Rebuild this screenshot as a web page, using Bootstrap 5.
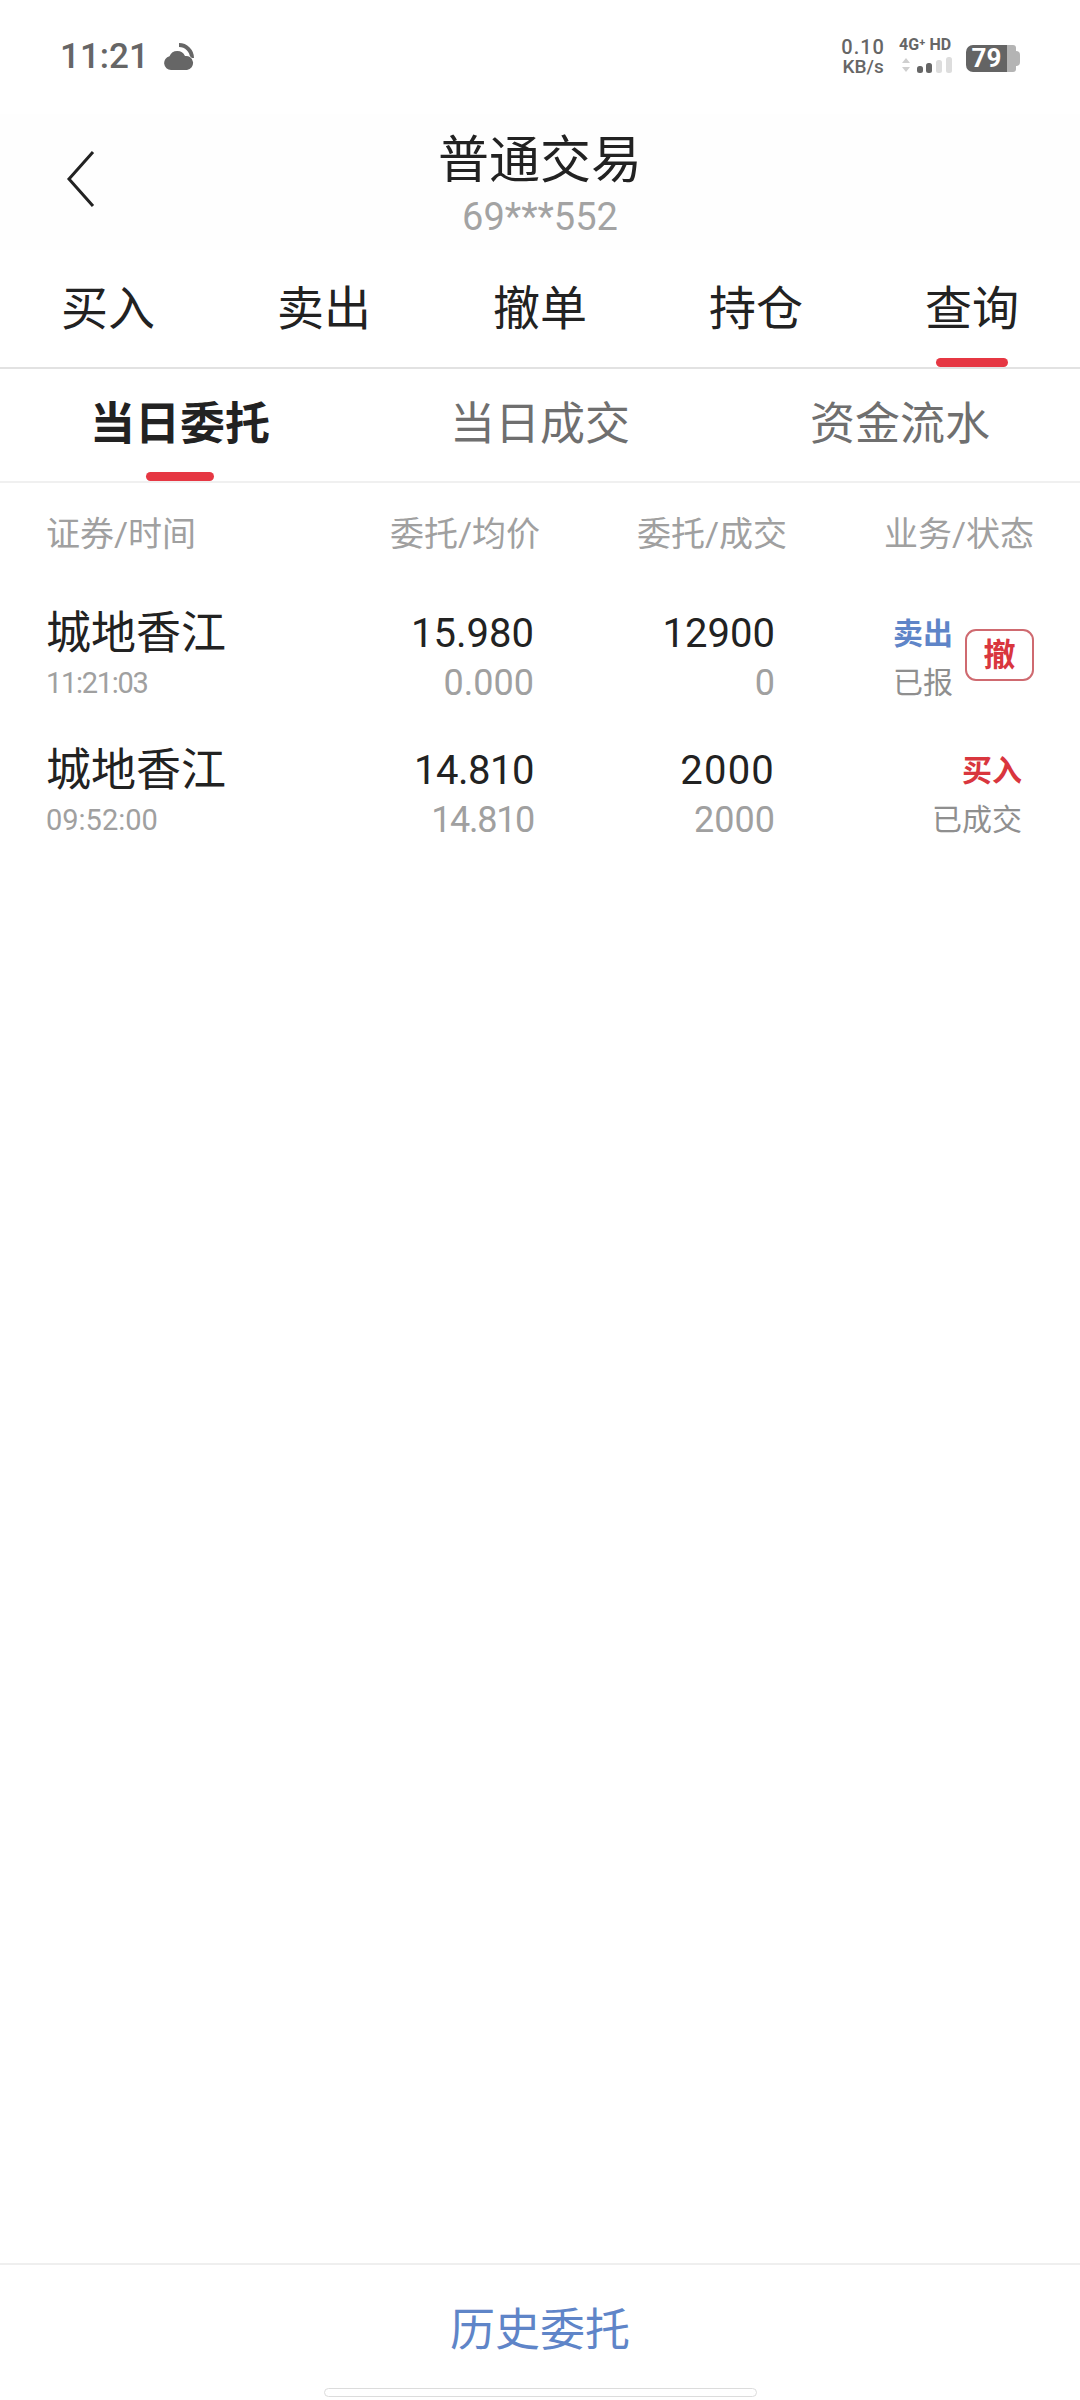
<!DOCTYPE html>
<html lang="zh-CN">
<head>
    <meta charset="UTF-8">
    <meta name="viewport" content="width=device-width, initial-scale=1.0">
    <title>普通交易</title>
    <link href="https://cdn.jsdelivr.net/npm/bootstrap@5.3.0/dist/css/bootstrap.min.css" rel="stylesheet">
    <style>
        html, body {
            height: 100%;
        }

        body {
            background: #fff;
            color: #222;
            font-family: Roboto, "Noto Sans CJK SC", sans-serif;
        }

        .phone-page {
            width: 1080px;
            height: 2400px;
        }

        .status-strip {
            height: 114px;
            padding: 28px 60px 0 60px;
            color: #666;
        }

        .clock-text {
            font-size: 35px;
            font-weight: 500;
            line-height: 58px;
        }

        .cloud-icon {
            margin: 15px 0 0 15px;
        }

        .speed-box {
            font-size: 19px;
            font-weight: 500;
            line-height: 20px;
            text-align: center;
            margin-top: 9px;
        }

        .speed-box b {
            display: block;
            font-size: 20px;
            font-weight: 500;
            letter-spacing: 1px;
        }

        .net-box {
            font-size: 16px;
            font-weight: 700;
            line-height: 16px;
            margin: 9px 0 0 14px;
            width: 58px;
            white-space: nowrap;
        }

        .batt-box {
            width: 41px;
            height: 27px;
            margin: 17px 0 0 9px;
            background: #646464;
            border-radius: 7px 0 0 7px;
            color: #fff;
            font-size: 26px;
            font-weight: 700;
            line-height: 27px;
            text-align: center;
        }

        .batt-end {
            width: 9px;
            height: 27px;
            margin-top: 17px;
            background: #b4b4b4;
            border-radius: 0 3px 3px 0;
        }

        .batt-nub {
            width: 4px;
            height: 15px;
            margin-top: 23px;
            background: #b4b4b4;
            border-radius: 0 4px 4px 0;
        }

        .title-bar {
            height: 136px;
            background: #fefefe;
        }

        .back-icon {
            left: 66px;
            top: 35px;
        }

        .title-main {
            font-size: 51px;
            line-height: 64px;
            color: #222;
            padding-top: 15px;
        }

        .title-sub {
            font-size: 38px;
            line-height: 48px;
            color: #a3a3a3;
        }

        .main-tabs {
            height: 119px;
            border-bottom: 2px solid #e2e2e2;
        }

        .main-tabs .nav-link,
        .sub-tabs .nav-link {
            padding: 0;
            border: 0;
            position: relative;
        }

        .main-tabs .nav-link {
            color: #222;
            font-size: 47px;
            line-height: 117px;
        }

        .sub-tabs {
            height: 114px;
            border-bottom: 2px solid #f0f0f0;
        }

        .sub-tabs .nav-link {
            color: #6f6f6f;
            font-size: 45px;
            line-height: 112px;
        }

        .sub-tabs .nav-link.active {
            color: #222;
            font-weight: 700;
        }

        .tab-mark {
            position: absolute;
            left: 50%;
            bottom: 0;
            transform: translateX(-50%);
            height: 9px;
            border-radius: 5px;
            background: #e63743;
        }

        .main-tabs .tab-mark {
            width: 72px;
        }

        .sub-tabs .tab-mark {
            width: 68px;
        }

        .order-head,
        .order-row {
            padding: 0 46px;
        }

        .order-head {
            height: 102px;
            color: #a0a0a0;
            font-size: 34px;
        }

        .order-head .col-price {
            width: 194px;
        }

        .order-head .col-qty {
            width: 247px;
        }

        .order-head .col-state {
            width: 247px;
        }

        .order-list {
            padding-top: 17px;
        }

        .order-row {
            height: 137px;
        }

        .col-name {
            width: 300px;
        }

        .col-price {
            width: 188px;
        }

        .col-qty {
            width: 241px;
        }

        .col-state {
            width: 259px;
        }

        .stock-name {
            font-size: 45px;
            line-height: 64px;
            color: #222;
        }

        .stock-time {
            font-size: 29px;
            line-height: 34px;
            color: #a0a0a0;
        }

        .narrow-ones {
            letter-spacing: -1.3px;
        }

        .num-top {
            font-size: 40px;
            line-height: 64px;
            color: #222;
        }

        .num-top.narrow-ones {
            letter-spacing: -0.5px;
        }

        .num-top.wide-zeros {
            letter-spacing: 1.2px;
        }

        .num-bottom {
            font-size: 36px;
            line-height: 34px;
            color: #a0a0a0;
        }

        .state-top {
            font-size: 30px;
            font-weight: 700;
            line-height: 64px;
        }

        .state-bottom {
            font-size: 30px;
            line-height: 34px;
            color: #8f8f8f;
        }

        .state-sell {
            color: #5f85c8;
        }

        .state-buy {
            color: #d9363e;
        }

        .state-indent {
            padding-right: 12px;
        }

        .cancel-btn {
            width: 69px;
            height: 52px;
            padding: 0;
            margin-left: 12px;
            margin-top: 27px;
            border: 2px solid #cf6a70;
            border-radius: 11px;
            background: #fff;
            color: #d9363e;
            font-size: 32px;
            font-weight: 700;
            line-height: 46px;
        }

        .foot-bar {
            height: 137px;
            border-top: 2px solid #efefef;
        }

        .foot-link {
            color: #5f85c8;
            font-size: 45px;
            line-height: 132px;
            text-decoration: none;
        }

        .home-pill {
            left: 324px;
            bottom: 3px;
            width: 433px;
            height: 9px;
            background: #fff;
            border: 1px solid #dcdcdc;
            border-radius: 5px;
        }
    </style>
</head>

<body>
    <div class="phone-page d-flex flex-column">
        <div class="status-strip d-flex">
            <span class="clock-text">11:21</span>
            <svg class="cloud-icon" width="30" height="27" viewBox="0 0 30 27">
                <path d="M15 2a13 13 0 0 1 13 13" fill="none" stroke="#666" stroke-width="4"/>
                <path d="M7 27a7 7 0 0 1-1.500-13.800A8.500 8.500 0 0 1 21 13a7 7 0 0 1 2 14z" fill="#666" stroke="#fff" stroke-width="1.500" paint-order="stroke"/>
            </svg>
            <div class="ms-auto d-flex">
                <div class="speed-box"><b>0.10</b>KB/s</div>
                <div class="net-box">
                    4G⁺ HD
                    <svg class="d-block mt-1" width="54" height="16" viewBox="0 0 54 16">
                        <path d="M3 6l4-5 4 5zM3 10l4 5 4-5z" fill="#cfcfcf"/>
                        <rect x="18" y="9" width="6" height="7" rx="2.500" fill="#666"/>
                        <rect x="27" y="6" width="6" height="10" rx="2.500" fill="#666"/>
                        <rect x="37" y="3" width="6" height="13" rx="2.500" fill="#ddd"/>
                        <rect x="47" y="0" width="6" height="16" rx="2.500" fill="#ddd"/>
                    </svg>
                </div>
                <div class="batt-box">79</div>
                <div class="batt-end"></div>
                <div class="batt-nub"></div>
            </div>
        </div>

        <div class="title-bar position-relative text-center">
            <svg class="back-icon position-absolute" width="30" height="60" viewBox="0 0 30 60">
                <path d="M27 3L3 30l24 27" fill="none" stroke="#222" stroke-width="3"/>
            </svg>
            <div class="title-main">普通交易</div>
            <div class="title-sub">69***552</div>
        </div>

        <ul class="main-tabs nav nav-fill flex-nowrap">
            <li class="nav-item"><a class="nav-link" href="#">买入</a></li>
            <li class="nav-item"><a class="nav-link" href="#">卖出</a></li>
            <li class="nav-item"><a class="nav-link" href="#">撤单</a></li>
            <li class="nav-item"><a class="nav-link" href="#">持仓</a></li>
            <li class="nav-item"><a class="nav-link" href="#">查询<span class="tab-mark"></span></a></li>
        </ul>

        <ul class="sub-tabs nav nav-fill flex-nowrap">
            <li class="nav-item"><a class="nav-link active" href="#">当日委托<span class="tab-mark"></span></a></li>
            <li class="nav-item"><a class="nav-link" href="#">当日成交</a></li>
            <li class="nav-item"><a class="nav-link" href="#">资金流水</a></li>
        </ul>

        <div class="order-head d-flex align-items-center">
            <div class="col-name">证券/时间</div>
            <div class="col-price text-end">委托/均价</div>
            <div class="col-qty text-end">委托/成交</div>
            <div class="col-state text-end">业务/状态</div>
        </div>

        <div class="order-list">
            <div class="order-row d-flex">
                <div class="col-name">
                    <div class="stock-name">城地香江</div>
                    <div class="stock-time narrow-ones">11:21:03</div>
                </div>
                <div class="col-price text-end">
                    <div class="num-top">15.980</div>
                    <div class="num-bottom">0.000</div>
                </div>
                <div class="col-qty text-end">
                    <div class="num-top">12900</div>
                    <div class="num-bottom">0</div>
                </div>
                <div class="col-state d-flex justify-content-end">
                    <div class="text-end">
                        <div class="state-top state-sell">卖出</div>
                        <div class="state-bottom">已报</div>
                    </div>
                    <button type="button" class="btn cancel-btn">撤</button>
                </div>
            </div>

            <div class="order-row d-flex">
                <div class="col-name">
                    <div class="stock-name">城地香江</div>
                    <div class="stock-time">09:52:00</div>
                </div>
                <div class="col-price text-end">
                    <div class="num-top narrow-ones">14.810</div>
                    <div class="num-bottom narrow-ones">14.810</div>
                </div>
                <div class="col-qty text-end">
                    <div class="num-top wide-zeros">2000</div>
                    <div class="num-bottom">2000</div>
                </div>
                <div class="col-state text-end state-indent">
                    <div class="state-top state-buy">买入</div>
                    <div class="state-bottom">已成交</div>
                </div>
            </div>
        </div>

        <div class="foot-bar mt-auto position-relative text-center">
            <a class="foot-link" href="#">历史委托</a>
            <div class="home-pill position-absolute"></div>
        </div>
    </div>

    <script src="https://cdn.jsdelivr.net/npm/bootstrap@5.3.0/dist/js/bootstrap.bundle.min.js"></script>
</body>

</html>
